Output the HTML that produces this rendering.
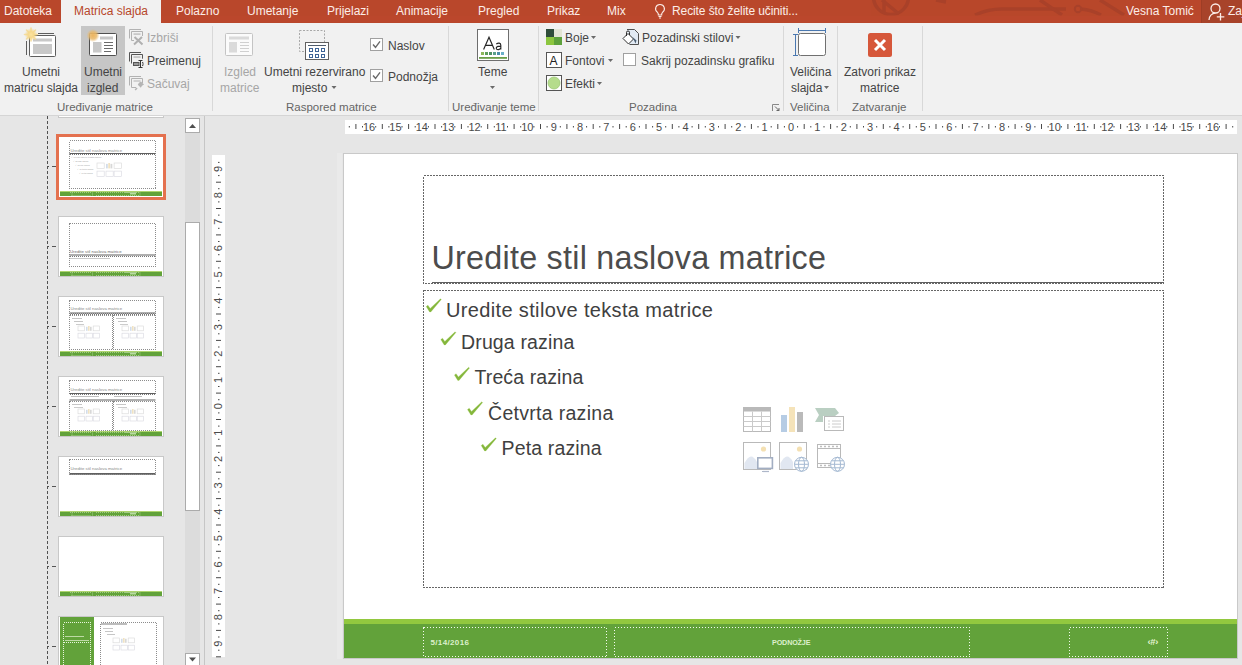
<!DOCTYPE html>
<html><head><meta charset="utf-8">
<style>
*{margin:0;padding:0;box-sizing:border-box}
html,body{width:1242px;height:665px;overflow:hidden;background:#E6E6E6;font-family:"Liberation Sans",sans-serif;position:relative}
.a{position:absolute}
.t{position:absolute;white-space:nowrap;font-size:12px;line-height:14px;color:#444}
#title{left:0;top:0;width:1242px;height:23px;background:#B9472B}
.tab{color:#FCEDE8}
#ribbon{left:0;top:23px;width:1242px;height:93px;background:#F1F1F1;border-bottom:1px solid #D5D5D5}
.sep{position:absolute;top:26px;width:1px;height:85px;background:#D8D8D8}
.gl{color:#666;font-size:11.5px}
.dis{color:#A6A6A6}
</style></head><body>

<!-- TITLE BAR -->
<div id="title" class="a">
  <svg class="a" style="left:0;top:0" width="1242" height="23">
    <defs><clipPath id="pc"><rect x="0" y="0" width="1242" height="15.5"/></clipPath></defs>
    <g fill="none" stroke="#A8412A" stroke-width="3.5" clip-path="url(#pc)" opacity="0.9">
      <circle cx="891" cy="-3" r="17.5"/>
      <path d="M884 -2 L884 12 M882 0 L899 14"/>
      <path d="M936 0 L946 2"/>
      <path d="M975 15 Q988 9 1002 9 L1066 9"/>
      <path d="M1040 0 L1062 15"/>
      <path d="M1081 9 Q1092 10 1101 15"/>
      <path d="M1100 0 L1124 15"/>
    </g>
    <circle cx="1078" cy="9" r="3.2" fill="none" stroke="#A8412A" stroke-width="2"/>
    <rect x="0" y="16" width="1242" height="6" fill="#C0472F" opacity="0.35"/>
  </svg>
  <div class="t tab" style="left:4px;top:4px">Datoteka</div>
  <div class="a" style="left:61px;top:0;width:100px;height:23px;background:#F1F1F1"></div>
  <div class="t" style="left:74px;top:4px;color:#B7472A">Matrica slajda</div>
  <div class="t tab" style="left:176px;top:4px">Polazno</div>
  <div class="t tab" style="left:247px;top:4px">Umetanje</div>
  <div class="t tab" style="left:327px;top:4px">Prijelazi</div>
  <div class="t tab" style="left:396px;top:4px">Animacije</div>
  <div class="t tab" style="left:478px;top:4px">Pregled</div>
  <div class="t tab" style="left:547px;top:4px">Prikaz</div>
  <div class="t tab" style="left:607px;top:4px">Mix</div>
  <svg class="a" style="left:654px;top:3px" width="12" height="16" viewBox="0 0 12 16">
    <path d="M6 1.5a4.3 4.3 0 0 0-2.6 7.8c.6.5.9 1.1.9 1.8V12h3.4v-.9c0-.7.3-1.3.9-1.8A4.3 4.3 0 0 0 6 1.5z M4.5 13.5h3 M5 15h2" fill="none" stroke="#FCEDE8" stroke-width="1.1"/>
  </svg>
  <div class="t tab" style="left:672px;top:4px;letter-spacing:-0.1px">Recite što želite učiniti...</div>
  <div class="t tab" style="left:1126px;top:4px">Vesna Tomić</div>
  <div class="a" style="left:1201px;top:0;width:41px;height:23px;background:#A8432A;border-left:1px solid #9E3D25"></div>
  <svg class="a" style="left:1207px;top:2px" width="19" height="19" viewBox="0 0 19 19">
    <circle cx="8.5" cy="6.5" r="4.5" fill="none" stroke="#FCEDE8" stroke-width="1.3"/>
    <path d="M2 18c0-4 2.8-6.8 6.5-6.8" fill="none" stroke="#FCEDE8" stroke-width="1.3"/>
    <path d="M13.5 11v7.5 M9.8 14.8h7.5" stroke="#FCEDE8" stroke-width="1.3"/>
  </svg>
  <div class="t tab" style="left:1228px;top:4px">Zaj</div>
</div>


<!-- RIBBON -->
<div id="ribbon" class="a"></div>
<!-- group 1 -->
<svg class="a" style="left:0;top:0" width="1242" height="116">
  <!-- Umetni matricu slajda icon -->
  <defs>
    <radialGradient id="sun1" cx="0.5" cy="0.5" r="0.5">
      <stop offset="0" stop-color="#FBE3A0"/><stop offset="0.45" stop-color="#F6D88C"/><stop offset="1" stop-color="#F6D88C" stop-opacity="0"/>
    </radialGradient>
    <radialGradient id="sun2" cx="0.5" cy="0.5" r="0.5">
      <stop offset="0" stop-color="#EDB45E"/><stop offset="0.55" stop-color="#E9B868" stop-opacity="0.85"/><stop offset="1" stop-color="#E9B868" stop-opacity="0"/>
    </radialGradient>
  </defs>
  <g>
    <path d="M38 33.5h16" stroke="#5E5E5E" stroke-width="1"/>
    <path d="M26.5 41v14" stroke="#5E5E5E" stroke-width="1"/>
    <rect x="29.5" y="35.5" width="26" height="21" rx="1" fill="#FFF" stroke="#5E5E5E"/>
    <rect x="33" y="38.5" width="19" height="3" fill="#C8C8C8"/>
    <rect x="33" y="44" width="19" height="10" fill="#C8C8C8"/>
    <path d="M31 28v13 M24.5 34.5h13 M26.5 30l9 9 M35.5 30l-9 9" stroke="#F5DA94" stroke-width="1.6" stroke-linecap="round" opacity="0.85"/>
    <circle cx="31" cy="34.5" r="6.5" fill="url(#sun1)"/>
  </g>
  <!-- highlighted Umetni izgled -->
  <rect x="81" y="26" width="44" height="69" fill="#C6C6C6"/>
  <g>
    <rect x="89.5" y="33.5" width="27" height="22" rx="1" fill="#FFF" stroke="#505050"/>
    <rect x="100" y="36.5" width="13" height="3" fill="#C6C6C6"/>
    <rect x="93" y="42" width="8.5" height="10.5" fill="#C8C8C8"/>
    <path d="M104 42.5h9 M104 45.5h9 M104 48.5h9 M104 51.5h7" stroke="#6A6A6A" stroke-width="1"/>
    <circle cx="93" cy="35.5" r="6.5" fill="url(#sun2)"/>
  </g>
  <!-- small icons -->
  <g fill="none" stroke="#B2B2B2" stroke-width="1">
    <path d="M129.5 38.5V29.5H141"/>
    <path d="M131.5 40.5V31.5H142.5V36 M131.5 40.5H134"/>
    <rect x="133.5" y="33.3" width="7" height="1.6" fill="#C4C4C4" stroke="none"/>
    <path d="M134.5 37l8 7.5 M142 37l-8 7.5" stroke="#B0B0B0" stroke-width="2"/>
  </g>
  <g fill="none" stroke="#555" stroke-width="1">
    <path d="M129.5 61.5V52.5H141"/>
    <path d="M131.5 63.5V54.5H142.5V58.7"/>
    <rect x="133.5" y="56.3" width="7" height="1.5" fill="#BBB" stroke="none"/>
    <rect x="133.5" y="62.5" width="5.5" height="3" fill="#999"/>
    <path d="M142 62.5h1v3h-1"/>
    <path d="M140.5 60.5v7 M138.5 60.5h4 M138.5 67.5h4" stroke="#333"/>
  </g>
  <g fill="none" stroke="#B2B2B2" stroke-width="1">
    <path d="M129.5 85.5V76.5H141"/>
    <path d="M131.5 87.5V78.5H142.5V83 M131.5 87.5H136"/>
    <rect x="133.5" y="80.3" width="7" height="1.4" fill="#C4C4C4" stroke="none"/>
    <path d="M141 81.5l3 3-2 1.2-1.2 2-3-3 1.2-2z" fill="#B4B4B4" stroke="none"/>
    <path d="M137 88l-1.8 2" stroke="#B4B4B4" stroke-width="1.5"/>
  </g>
  <!-- Izgled matrice icon (disabled) -->
  <g>
    <rect x="225.5" y="33.5" width="27" height="22" rx="1" fill="#FBFBFB" stroke="#C4C4C4"/>
    <rect x="229" y="36.5" width="20" height="3" fill="#DADADA"/>
    <rect x="229" y="42" width="8" height="10.5" fill="#DADADA"/>
    <path d="M240 42.5h9 M240 45.5h9 M240 48.5h9 M240 51.5h9" stroke="#D0D0D0"/>
  </g>
  <!-- Umetni rezervirano mjesto icon -->
  <g>
    <rect x="299.5" y="30.5" width="25" height="21" fill="none" stroke="#A8A8A8" stroke-dasharray="2 1.5"/>
    <rect x="305.5" y="42.5" width="23" height="17" fill="#FFF" stroke="#606060"/>
    <path d="M308 45.5h18" stroke="#505C6C" stroke-width="1"/>
    <g fill="none" stroke="#3E6496" stroke-width="1">
      <rect x="309.5" y="48.5" width="3" height="3"/><rect x="315.5" y="48.5" width="3" height="3"/><rect x="321.5" y="48.5" width="3" height="3"/>
      <rect x="309.5" y="54.5" width="3" height="3"/><rect x="315.5" y="54.5" width="3" height="3"/><rect x="321.5" y="54.5" width="3" height="3"/>
    </g>
  </g>
  <!-- checkboxes -->
  <rect x="370.5" y="38.5" width="12" height="12" fill="#FFF" stroke="#A0A0A0"/>
  <path d="M373 44.5l2.5 2.8 4.5-6" fill="none" stroke="#6A6A6A" stroke-width="1.4"/>
  <rect x="370.5" y="69.5" width="12" height="12" fill="#FFF" stroke="#A0A0A0"/>
  <path d="M373 75.5l2.5 2.8 4.5-6" fill="none" stroke="#6A6A6A" stroke-width="1.4"/>
  <!-- Teme icon -->
  <rect x="477.5" y="29.5" width="31" height="31" fill="#FFF" stroke="#6E6E6E"/>
  <g fill="none" stroke="#262626" stroke-width="1.15">
    <path d="M483.6 49.6L489 37.3L494.3 49.6 M485.4 45.3H492.6"/>
    <path d="M496.3 43.9Q497.8 42.9 499.2 43.1Q500.8 43.4 500.8 45.2V49.6 M500.8 46.1Q497.6 46 496.6 47.2Q495.9 48.2 496.6 49.1Q497.3 49.8 498.6 49.6Q500.2 49.3 500.8 48"/>
  </g>
  <g>
    <rect x="481" y="52" width="3" height="3" fill="#8DB85A"/>
    <rect x="485" y="52" width="3" height="3" fill="#5E9E5A"/>
    <rect x="489" y="52" width="3" height="3" fill="#4E9064"/>
    <rect x="493" y="52" width="3" height="3" fill="#5AA08A"/>
    <rect x="497" y="52" width="3" height="3" fill="#4A8EA8"/>
    <rect x="501" y="52" width="3" height="3" fill="#6AB0C8"/>
    <rect x="479" y="57" width="28" height="1.8" fill="#6A9E48"/>
  </g>
  <!-- Boje -->
  <rect x="546" y="29" width="8" height="8" fill="#2F4D3A"/>
  <rect x="554" y="29" width="8" height="8" fill="#E2E4D4"/>
  <rect x="546" y="37" width="8" height="8" fill="#8CC63F"/>
  <rect x="554" y="37" width="8" height="8" fill="#5DA13C"/>
  <!-- Fontovi -->
  <rect x="546.5" y="52.5" width="15" height="15" fill="#FFF" stroke="#555"/>
  <text x="549.5" y="65" font-family="Liberation Sans" font-size="12" fill="#222">A</text>
  <!-- Efekti -->
  <rect x="546.5" y="75.5" width="15" height="15" fill="#FFF" stroke="#555"/>
  <circle cx="554" cy="83" r="6" fill="#B5DC8C" stroke="#9CC874" stroke-width="0.8"/>
  <!-- Pozadinski stilovi icon -->
  <path d="M627 29.5H634.5L638.5 33.5V44.5H629.5" fill="#E2EAF3" stroke="#505050"/>
  <path d="M623 38.5L628 33.5L633.5 39L628.5 44Z" fill="#FFF" stroke="#303030"/>
  <path d="M626.5 36V32.3Q626.5 31 628 31Q629.5 31 629.5 32.3V35" fill="none" stroke="#303030"/>
  <path d="M632.5 37L636.5 40.5L635.5 43.5Z" fill="#4A5E72"/>
  <!-- Sakrij checkbox -->
  <rect x="623.5" y="53.5" width="12" height="12" fill="#FFF" stroke="#A0A0A0"/>
  <!-- dialog launcher -->
  <path d="M772.5 111V104.5H779" fill="none" stroke="#888"/>
  <path d="M775 106.5l4 4 M779 108v2.5h-2.5" fill="none" stroke="#666"/>
  <!-- Velicina icon -->
  <path d="M798 30.5h28 M798.5 28v5 M825.5 28v5" stroke="#4A78B0" stroke-width="1"/>
  <path d="M795.5 34v22 M793 34.5h5 M793 55.5h5" stroke="#4A78B0" stroke-width="1"/>
  <rect x="798.5" y="33.5" width="27" height="22" rx="2" fill="#FFF" stroke="#707070"/>
  <!-- close -->
  <rect x="868" y="33" width="24" height="24" rx="2.5" fill="#D6573A"/>
  <path d="M875 40l10 10 M885 40l-10 10" stroke="#FFF" stroke-width="3"/>
  <!-- dropdown arrows -->
  <g fill="#6A6A6A">
    <path d="M331.5 86h5l-2.5 3z"/>
    <path d="M490 86h5l-2.5 3z"/>
    <path d="M591 36h5l-2.5 3z"/>
    <path d="M608 59h5l-2.5 3z"/>
    <path d="M597 82h5l-2.5 3z"/>
    <path d="M735.5 36h5l-2.5 3z"/>
    <path d="M824 86h5l-2.5 3z"/>
  </g>
</svg>
<div class="sep" style="left:212px"></div>
<div class="sep" style="left:448px"></div>
<div class="sep" style="left:538px"></div>
<div class="sep" style="left:783px"></div>
<div class="sep" style="left:837px"></div>
<div class="sep" style="left:922px"></div>

<div class="t" style="left:22px;top:65px">Umetni</div>
<div class="t" style="left:4px;top:81px">matricu slajda</div>
<div class="t" style="left:84px;top:65px">Umetni</div>
<div class="t" style="left:87px;top:81px">izgled</div>
<div class="t dis" style="left:147px;top:31px">Izbriši</div>
<div class="t" style="left:147px;top:54px">Preimenuj</div>
<div class="t dis" style="left:147px;top:77px">Sačuvaj</div>
<div class="t gl" style="left:57px;top:100px">Uređivanje matrice</div>

<div class="t dis" style="left:224px;top:65px">Izgled</div>
<div class="t dis" style="left:220px;top:81px">matrice</div>
<div class="t" style="left:264px;top:65px">Umetni rezervirano</div>
<div class="t" style="left:292px;top:81px">mjesto</div>
<div class="t" style="left:388px;top:39px">Naslov</div>
<div class="t" style="left:388px;top:70px">Podnožja</div>
<div class="t gl" style="left:286px;top:100px">Raspored matrice</div>

<div class="t" style="left:478px;top:65px">Teme</div>
<div class="t gl" style="left:452px;top:100px">Uređivanje teme</div>

<div class="t" style="left:565px;top:31px">Boje</div>
<div class="t" style="left:565px;top:54px">Fontovi</div>
<div class="t" style="left:565px;top:77px">Efekti</div>
<div class="t" style="left:642px;top:31px">Pozadinski stilovi</div>
<div class="t" style="left:641px;top:54px">Sakrij pozadinsku grafiku</div>
<div class="t gl" style="left:629px;top:100px">Pozadina</div>

<div class="t" style="left:790px;top:65px">Veličina</div>
<div class="t" style="left:791px;top:81px">slajda</div>
<div class="t gl" style="left:790px;top:100px">Veličina</div>

<div class="t" style="left:844px;top:65px">Zatvori prikaz</div>
<div class="t" style="left:860px;top:81px">matrice</div>
<div class="t gl" style="left:852px;top:100px">Zatvaranje</div>

<!-- WORKSPACE -->
<!-- PANE -->
<div class="a" style="left:0;top:116px;width:204px;height:549px;background:#E6E6E6;overflow:hidden">
<svg class="a" style="left:0;top:-116px" width="204" height="665">
  <line x1="47.5" y1="116" x2="47.5" y2="665" stroke="#505050" stroke-width="1" stroke-dasharray="3 2"/>
  <rect x="52" y="166" width="4" height="1" fill="#555"/><rect x="48" y="166" width="1" height="1" fill="#555"/><rect x="52" y="246" width="4" height="1" fill="#555"/><rect x="48" y="246" width="1" height="1" fill="#555"/><rect x="52" y="326" width="4" height="1" fill="#555"/><rect x="48" y="326" width="1" height="1" fill="#555"/><rect x="52" y="406" width="4" height="1" fill="#555"/><rect x="48" y="406" width="1" height="1" fill="#555"/><rect x="52" y="486" width="4" height="1" fill="#555"/><rect x="48" y="486" width="1" height="1" fill="#555"/><rect x="52" y="566" width="4" height="1" fill="#555"/><rect x="48" y="566" width="1" height="1" fill="#555"/><rect x="52" y="646" width="4" height="1" fill="#555"/><rect x="48" y="646" width="1" height="1" fill="#555"/>
  <rect x="58.5" y="108" width="105" height="9.5" fill="#FFF" stroke="#C8C8C8"/>
<rect x="60" y="112" width="102" height="4" fill="#62A23A"/>
<rect x="57.5" y="135.5" width="107" height="63" fill="#FFF" stroke="#E4714F" stroke-width="3"/>
<rect x="69.5" y="140.5" width="86.0" height="48.0" fill="none" stroke="#8C8C8C" stroke-width="1" stroke-dasharray="1 1" shape-rendering="crispEdges"/>
<text x="70.5" y="151.5" font-family="Liberation Sans" font-size="4.3" fill="#8A8A8A" letter-spacing="0">Uredite stil naslova matrice</text>
<rect x="69.5" y="153" width="86.0" height="1" fill="#606060"/><line x1="69.5" y1="154.5" x2="155.5" y2="154.5" stroke="#777" stroke-width="1" stroke-dasharray="1 1" shape-rendering="crispEdges"/>
<text x="71" y="158.0" font-family="Liberation Sans" font-size="2.2" fill="#A0A0A0" letter-spacing="0">✓ Uredite stilove teksta matrice</text><text x="73" y="162.0" font-family="Liberation Sans" font-size="2.2" fill="#A0A0A0" letter-spacing="0">✓ Druga razina</text><text x="75" y="166.0" font-family="Liberation Sans" font-size="2.2" fill="#A0A0A0" letter-spacing="0">✓ Treća razina</text><text x="77" y="170.0" font-family="Liberation Sans" font-size="2.2" fill="#A0A0A0" letter-spacing="0">✓ Četvrta razina</text><text x="79" y="174.0" font-family="Liberation Sans" font-size="2.2" fill="#A0A0A0" letter-spacing="0">✓ Peta razina</text>
<g opacity="0.45"><rect x="97" y="163" width="7.2" height="5.4" fill="none" stroke="#AAA" stroke-width="0.6"/><rect x="106.0" y="163.9" width="1.8" height="4.5" fill="#9DB5D2"/><rect x="108.25" y="163" width="1.8" height="5.4" fill="#E2C27A"/><rect x="110.5" y="163.9" width="1.8" height="4.5" fill="#AAA"/><rect x="114.1" y="163" width="7.2" height="5.4" fill="none" stroke="#AAA" stroke-width="0.6"/><rect x="97" y="171.1" width="7.2" height="5.4" fill="none" stroke="#AAB" stroke-width="0.6"/><rect x="106.0" y="171.1" width="7.2" height="5.4" fill="none" stroke="#AAB" stroke-width="0.6"/><rect x="114.1" y="171.1" width="7.2" height="5.4" fill="none" stroke="#AAB" stroke-width="0.6"/></g>
<rect x="60" y="191.2" width="102" height="0.8" fill="#9ACB4A"/><rect x="60" y="192" width="102" height="4" fill="#62A23A"/><path d="M70 192.5h21 M71.5 195.5h20 M72 192.5v3 M92.5 192.5v3 M96 192.5h43 M96 195.5h43 M140 192.5v3 M125 192.5h12" stroke="#CFE6B8" stroke-width="0.6" stroke-dasharray="1 1" fill="none"/><rect x="130" y="193" width="6" height="1.5" fill="#B9DBA0"/>
<rect x="58.5" y="216.5" width="105" height="60" fill="#FFF" stroke="#C8C8C8"/>
<rect x="69.5" y="223.5" width="86.0" height="42.5" fill="none" stroke="#8C8C8C" stroke-width="1" stroke-dasharray="1 1" shape-rendering="crispEdges"/>
<text x="70" y="252.5" font-family="Liberation Sans" font-size="4.3" fill="#6A6A6A" letter-spacing="0">Uredite stil naslova matrice</text>
<rect x="69.5" y="254.5" width="86.0" height="1" fill="#606060"/><line x1="69.5" y1="256.0" x2="155.5" y2="256.0" stroke="#777" stroke-width="1" stroke-dasharray="1 1" shape-rendering="crispEdges"/>
<rect x="70" y="258" width="40" height="1" fill="#C8C8C8"/>
<rect x="60" y="271.2" width="102" height="0.8" fill="#9ACB4A"/><rect x="60" y="272" width="102" height="4" fill="#62A23A"/><path d="M70 272.5h21 M71.5 275.5h20 M72 272.5v3 M92.5 272.5v3 M96 272.5h43 M96 275.5h43 M140 272.5v3 M125 272.5h12" stroke="#CFE6B8" stroke-width="0.6" stroke-dasharray="1 1" fill="none"/><rect x="130" y="273" width="6" height="1.5" fill="#B9DBA0"/>
<rect x="58.5" y="296.5" width="105" height="60" fill="#FFF" stroke="#C8C8C8"/>
<rect x="69.5" y="300.5" width="86.0" height="12.5" fill="none" stroke="#8C8C8C" stroke-width="1" stroke-dasharray="1 1" shape-rendering="crispEdges"/>
<text x="70.5" y="310" font-family="Liberation Sans" font-size="4.3" fill="#8A8A8A" letter-spacing="0">Uredite stil naslova matrice</text>
<rect x="69.5" y="312.5" width="86.0" height="1" fill="#606060"/><line x1="69.5" y1="314.0" x2="155.5" y2="314.0" stroke="#777" stroke-width="1" stroke-dasharray="1 1" shape-rendering="crispEdges"/>
<rect x="69.5" y="315" width="43.0" height="34.5" fill="none" stroke="#8C8C8C" stroke-width="1" stroke-dasharray="1 1" shape-rendering="crispEdges"/>
<rect x="113.5" y="315" width="42.0" height="34.5" fill="none" stroke="#8C8C8C" stroke-width="1" stroke-dasharray="1 1" shape-rendering="crispEdges"/>
<rect x="72" y="318" width="10" height="0.8" fill="#B8B8B8"/>
<rect x="74" y="321" width="9" height="0.8" fill="#B8B8B8"/>
<rect x="76" y="324" width="8" height="0.8" fill="#C0C0C0"/>
<g opacity="0.45"><rect x="78" y="326" width="6.4" height="4.800000000000001" fill="none" stroke="#AAA" stroke-width="0.6"/><rect x="86.0" y="326.8" width="1.6" height="4.0" fill="#9DB5D2"/><rect x="88.0" y="326" width="1.6" height="4.800000000000001" fill="#E2C27A"/><rect x="90.0" y="326.8" width="1.6" height="4.0" fill="#AAA"/><rect x="93.2" y="326" width="6.4" height="4.800000000000001" fill="none" stroke="#AAA" stroke-width="0.6"/><rect x="78" y="333.2" width="6.4" height="4.800000000000001" fill="none" stroke="#AAB" stroke-width="0.6"/><rect x="86.0" y="333.2" width="6.4" height="4.800000000000001" fill="none" stroke="#AAB" stroke-width="0.6"/><rect x="93.2" y="333.2" width="6.4" height="4.800000000000001" fill="none" stroke="#AAB" stroke-width="0.6"/></g>
<rect x="116" y="318" width="10" height="0.8" fill="#B8B8B8"/>
<rect x="118" y="321" width="9" height="0.8" fill="#B8B8B8"/>
<rect x="120" y="324" width="8" height="0.8" fill="#C0C0C0"/>
<g opacity="0.45"><rect x="122" y="326" width="6.4" height="4.800000000000001" fill="none" stroke="#AAA" stroke-width="0.6"/><rect x="130.0" y="326.8" width="1.6" height="4.0" fill="#9DB5D2"/><rect x="132.0" y="326" width="1.6" height="4.800000000000001" fill="#E2C27A"/><rect x="134.0" y="326.8" width="1.6" height="4.0" fill="#AAA"/><rect x="137.2" y="326" width="6.4" height="4.800000000000001" fill="none" stroke="#AAA" stroke-width="0.6"/><rect x="122" y="333.2" width="6.4" height="4.800000000000001" fill="none" stroke="#AAB" stroke-width="0.6"/><rect x="130.0" y="333.2" width="6.4" height="4.800000000000001" fill="none" stroke="#AAB" stroke-width="0.6"/><rect x="137.2" y="333.2" width="6.4" height="4.800000000000001" fill="none" stroke="#AAB" stroke-width="0.6"/></g>
<rect x="60" y="351.2" width="102" height="0.8" fill="#9ACB4A"/><rect x="60" y="352" width="102" height="4" fill="#62A23A"/><path d="M70 352.5h21 M71.5 355.5h20 M72 352.5v3 M92.5 352.5v3 M96 352.5h43 M96 355.5h43 M140 352.5v3 M125 352.5h12" stroke="#CFE6B8" stroke-width="0.6" stroke-dasharray="1 1" fill="none"/><rect x="130" y="353" width="6" height="1.5" fill="#B9DBA0"/>
<rect x="58.5" y="376.5" width="105" height="60" fill="#FFF" stroke="#C8C8C8"/>
<rect x="69.5" y="380.5" width="86.0" height="13.5" fill="none" stroke="#8C8C8C" stroke-width="1" stroke-dasharray="1 1" shape-rendering="crispEdges"/>
<text x="70.5" y="390.5" font-family="Liberation Sans" font-size="4.3" fill="#8A8A8A" letter-spacing="0">Uredite stil naslova matrice</text>
<rect x="69.5" y="393" width="86.0" height="1" fill="#606060"/><line x1="69.5" y1="394.5" x2="155.5" y2="394.5" stroke="#777" stroke-width="1" stroke-dasharray="1 1" shape-rendering="crispEdges"/>
<rect x="71" y="396" width="28" height="0.8" fill="#B0B0B0"/>
<rect x="114" y="396" width="28" height="0.8" fill="#B0B0B0"/>
<rect x="69.5" y="399.5" width="86.0" height="1" fill="#606060"/><line x1="69.5" y1="401.0" x2="155.5" y2="401.0" stroke="#777" stroke-width="1" stroke-dasharray="1 1" shape-rendering="crispEdges"/>
<rect x="69.5" y="401.5" width="43.0" height="28.5" fill="none" stroke="#8C8C8C" stroke-width="1" stroke-dasharray="1 1" shape-rendering="crispEdges"/>
<rect x="113.5" y="401.5" width="42.0" height="28.5" fill="none" stroke="#8C8C8C" stroke-width="1" stroke-dasharray="1 1" shape-rendering="crispEdges"/>
<rect x="72" y="404" width="10" height="0.8" fill="#B8B8B8"/>
<rect x="74" y="407" width="9" height="0.8" fill="#C0C0C0"/>
<g opacity="0.45"><rect x="78" y="409" width="6.4" height="4.800000000000001" fill="none" stroke="#AAA" stroke-width="0.6"/><rect x="86.0" y="409.8" width="1.6" height="4.0" fill="#9DB5D2"/><rect x="88.0" y="409" width="1.6" height="4.800000000000001" fill="#E2C27A"/><rect x="90.0" y="409.8" width="1.6" height="4.0" fill="#AAA"/><rect x="93.2" y="409" width="6.4" height="4.800000000000001" fill="none" stroke="#AAA" stroke-width="0.6"/><rect x="78" y="416.2" width="6.4" height="4.800000000000001" fill="none" stroke="#AAB" stroke-width="0.6"/><rect x="86.0" y="416.2" width="6.4" height="4.800000000000001" fill="none" stroke="#AAB" stroke-width="0.6"/><rect x="93.2" y="416.2" width="6.4" height="4.800000000000001" fill="none" stroke="#AAB" stroke-width="0.6"/></g>
<rect x="116" y="404" width="10" height="0.8" fill="#B8B8B8"/>
<rect x="118" y="407" width="9" height="0.8" fill="#C0C0C0"/>
<g opacity="0.45"><rect x="122" y="409" width="6.4" height="4.800000000000001" fill="none" stroke="#AAA" stroke-width="0.6"/><rect x="130.0" y="409.8" width="1.6" height="4.0" fill="#9DB5D2"/><rect x="132.0" y="409" width="1.6" height="4.800000000000001" fill="#E2C27A"/><rect x="134.0" y="409.8" width="1.6" height="4.0" fill="#AAA"/><rect x="137.2" y="409" width="6.4" height="4.800000000000001" fill="none" stroke="#AAA" stroke-width="0.6"/><rect x="122" y="416.2" width="6.4" height="4.800000000000001" fill="none" stroke="#AAB" stroke-width="0.6"/><rect x="130.0" y="416.2" width="6.4" height="4.800000000000001" fill="none" stroke="#AAB" stroke-width="0.6"/><rect x="137.2" y="416.2" width="6.4" height="4.800000000000001" fill="none" stroke="#AAB" stroke-width="0.6"/></g>
<rect x="60" y="431.2" width="102" height="0.8" fill="#9ACB4A"/><rect x="60" y="432" width="102" height="4" fill="#62A23A"/><path d="M70 432.5h21 M71.5 435.5h20 M72 432.5v3 M92.5 432.5v3 M96 432.5h43 M96 435.5h43 M140 432.5v3 M125 432.5h12" stroke="#CFE6B8" stroke-width="0.6" stroke-dasharray="1 1" fill="none"/><rect x="130" y="433" width="6" height="1.5" fill="#B9DBA0"/>
<rect x="58.5" y="456.5" width="105" height="60" fill="#FFF" stroke="#C8C8C8"/>
<rect x="69.5" y="459.5" width="86.0" height="14.5" fill="none" stroke="#8C8C8C" stroke-width="1" stroke-dasharray="1 1" shape-rendering="crispEdges"/>
<text x="70.5" y="470" font-family="Liberation Sans" font-size="4.3" fill="#8A8A8A" letter-spacing="0">Uredite stil naslova matrice</text>
<rect x="69.5" y="473" width="86.0" height="1" fill="#606060"/><line x1="69.5" y1="474.5" x2="155.5" y2="474.5" stroke="#777" stroke-width="1" stroke-dasharray="1 1" shape-rendering="crispEdges"/>
<rect x="60" y="511.2" width="102" height="0.8" fill="#9ACB4A"/><rect x="60" y="512" width="102" height="4" fill="#62A23A"/><path d="M70 512.5h21 M71.5 515.5h20 M72 512.5v3 M92.5 512.5v3 M96 512.5h43 M96 515.5h43 M140 512.5v3 M125 512.5h12" stroke="#CFE6B8" stroke-width="0.6" stroke-dasharray="1 1" fill="none"/><rect x="130" y="513" width="6" height="1.5" fill="#B9DBA0"/>
<rect x="58.5" y="536.5" width="105" height="60" fill="#FFF" stroke="#C8C8C8"/>
<rect x="60" y="591.2" width="102" height="0.8" fill="#9ACB4A"/><rect x="60" y="592" width="102" height="4" fill="#62A23A"/><path d="M70 592.5h21 M71.5 595.5h20 M72 592.5v3 M92.5 592.5v3 M96 592.5h43 M96 595.5h43 M140 592.5v3 M125 592.5h12" stroke="#CFE6B8" stroke-width="0.6" stroke-dasharray="1 1" fill="none"/><rect x="130" y="593" width="6" height="1.5" fill="#B9DBA0"/>
<rect x="58.5" y="616.5" width="105" height="60" fill="#FFF" stroke="#C8C8C8"/>
<rect x="60" y="617" width="34" height="48" fill="#62A23A"/>
<rect x="63.5" y="622.5" width="27" height="45" fill="none" stroke="#E8F4DC" stroke-width="1" stroke-dasharray="1 1" shape-rendering="crispEdges"/>
<rect x="65" y="636" width="19" height="0.9" fill="#C8E0B0"/>
<rect x="65" y="640" width="24" height="0.9" fill="#C8E0B0"/>
<line x1="63.5" y1="642.5" x2="90.5" y2="642.5" stroke="#E8F4DC" stroke-width="1" stroke-dasharray="1 1" shape-rendering="crispEdges"/>
<rect x="100.5" y="622.5" width="55.5" height="42.5" fill="none" stroke="#8C8C8C" stroke-width="1" stroke-dasharray="1 1" shape-rendering="crispEdges"/>
<rect x="101" y="623.5" width="26" height="1" fill="#7A7A7A"/>
<rect x="103" y="628" width="10" height="0.8" fill="#B8B8B8"/>
<rect x="105" y="631" width="8" height="0.8" fill="#B8B8B8"/>
<rect x="107" y="634" width="8" height="0.8" fill="#B8B8B8"/>
<g opacity="0.45"><rect x="113" y="638" width="6.4" height="4.800000000000001" fill="none" stroke="#AAA" stroke-width="0.6"/><rect x="121.0" y="638.8" width="1.6" height="4.0" fill="#9DB5D2"/><rect x="123.0" y="638" width="1.6" height="4.800000000000001" fill="#E2C27A"/><rect x="125.0" y="638.8" width="1.6" height="4.0" fill="#AAA"/><rect x="128.2" y="638" width="6.4" height="4.800000000000001" fill="none" stroke="#AAA" stroke-width="0.6"/><rect x="113" y="645.2" width="6.4" height="4.800000000000001" fill="none" stroke="#AAB" stroke-width="0.6"/><rect x="121.0" y="645.2" width="6.4" height="4.800000000000001" fill="none" stroke="#AAB" stroke-width="0.6"/><rect x="128.2" y="645.2" width="6.4" height="4.800000000000001" fill="none" stroke="#AAB" stroke-width="0.6"/></g>
  <rect x="185" y="118" width="15" height="547" fill="#DCDCDC"/>
  <rect x="185.5" y="118.5" width="14" height="14" fill="#FFF" stroke="#ABABAB"/>
  <path d="M189 128h7l-3.5-4z" fill="#505050"/>
  <rect x="185.5" y="222.5" width="14" height="288" fill="#FFF" stroke="#ABABAB"/>
  <rect x="185.5" y="653.5" width="14" height="14" fill="#FFF" stroke="#ABABAB"/>
  <path d="M189 657.5h7l-3.5 4z" fill="#505050"/>
</svg>
</div>
<div class="a" style="left:204px;top:116px;width:1px;height:549px;background:#C6C6C6"></div>

<!-- RULERS -->
<svg class="a" style="left:0;top:0" width="1242" height="665">
  <rect x="345" y="120" width="892" height="14" fill="#FFF"/>
  <g font-family="Liberation Sans" font-size="11" fill="#4A4A4A">
  <rect x="348.8" y="126" width="1" height="1.5"/>
<rect x="355.4" y="124" width="1" height="5"/>
<rect x="362.0" y="126" width="1" height="1.5"/>
<text x="369.1" y="131" text-anchor="middle">16</text>
<rect x="375.2" y="126" width="1" height="1.5"/>
<rect x="381.8" y="124" width="1" height="5"/>
<rect x="388.4" y="126" width="1" height="1.5"/>
<text x="395.4" y="131" text-anchor="middle">15</text>
<rect x="401.5" y="126" width="1" height="1.5"/>
<rect x="408.1" y="124" width="1" height="5"/>
<rect x="414.7" y="126" width="1" height="1.5"/>
<text x="421.8" y="131" text-anchor="middle">14</text>
<rect x="427.9" y="126" width="1" height="1.5"/>
<rect x="434.5" y="124" width="1" height="5"/>
<rect x="441.1" y="126" width="1" height="1.5"/>
<text x="448.2" y="131" text-anchor="middle">13</text>
<rect x="454.3" y="126" width="1" height="1.5"/>
<rect x="460.9" y="124" width="1" height="5"/>
<rect x="467.5" y="126" width="1" height="1.5"/>
<text x="474.6" y="131" text-anchor="middle">12</text>
<rect x="480.7" y="126" width="1" height="1.5"/>
<rect x="487.2" y="124" width="1" height="5"/>
<rect x="493.8" y="126" width="1" height="1.5"/>
<text x="500.9" y="131" text-anchor="middle">11</text>
<rect x="507.0" y="126" width="1" height="1.5"/>
<rect x="513.6" y="124" width="1" height="5"/>
<rect x="520.2" y="126" width="1" height="1.5"/>
<text x="527.3" y="131" text-anchor="middle">10</text>
<rect x="533.4" y="126" width="1" height="1.5"/>
<rect x="540.0" y="124" width="1" height="5"/>
<rect x="546.6" y="126" width="1" height="1.5"/>
<text x="553.7" y="131" text-anchor="middle">9</text>
<rect x="559.8" y="126" width="1" height="1.5"/>
<rect x="566.4" y="124" width="1" height="5"/>
<rect x="572.9" y="126" width="1" height="1.5"/>
<text x="580.0" y="131" text-anchor="middle">8</text>
<rect x="586.1" y="126" width="1" height="1.5"/>
<rect x="592.7" y="124" width="1" height="5"/>
<rect x="599.3" y="126" width="1" height="1.5"/>
<text x="606.4" y="131" text-anchor="middle">7</text>
<rect x="612.5" y="126" width="1" height="1.5"/>
<rect x="619.1" y="124" width="1" height="5"/>
<rect x="625.7" y="126" width="1" height="1.5"/>
<text x="632.8" y="131" text-anchor="middle">6</text>
<rect x="638.9" y="126" width="1" height="1.5"/>
<rect x="645.5" y="124" width="1" height="5"/>
<rect x="652.1" y="126" width="1" height="1.5"/>
<text x="659.1" y="131" text-anchor="middle">5</text>
<rect x="665.2" y="126" width="1" height="1.5"/>
<rect x="671.8" y="124" width="1" height="5"/>
<rect x="678.4" y="126" width="1" height="1.5"/>
<text x="685.5" y="131" text-anchor="middle">4</text>
<rect x="691.6" y="126" width="1" height="1.5"/>
<rect x="698.2" y="124" width="1" height="5"/>
<rect x="704.8" y="126" width="1" height="1.5"/>
<text x="711.9" y="131" text-anchor="middle">3</text>
<rect x="718.0" y="126" width="1" height="1.5"/>
<rect x="724.6" y="124" width="1" height="5"/>
<rect x="731.2" y="126" width="1" height="1.5"/>
<text x="738.3" y="131" text-anchor="middle">2</text>
<rect x="744.4" y="126" width="1" height="1.5"/>
<rect x="750.9" y="124" width="1" height="5"/>
<rect x="757.5" y="126" width="1" height="1.5"/>
<text x="764.6" y="131" text-anchor="middle">1</text>
<rect x="770.7" y="126" width="1" height="1.5"/>
<rect x="777.3" y="124" width="1" height="5"/>
<rect x="783.9" y="126" width="1" height="1.5"/>
<text x="791.0" y="131" text-anchor="middle">0</text>
<rect x="797.1" y="126" width="1" height="1.5"/>
<rect x="803.7" y="124" width="1" height="5"/>
<rect x="810.3" y="126" width="1" height="1.5"/>
<text x="817.4" y="131" text-anchor="middle">1</text>
<rect x="823.5" y="126" width="1" height="1.5"/>
<rect x="830.1" y="124" width="1" height="5"/>
<rect x="836.6" y="126" width="1" height="1.5"/>
<text x="843.7" y="131" text-anchor="middle">2</text>
<rect x="849.8" y="126" width="1" height="1.5"/>
<rect x="856.4" y="124" width="1" height="5"/>
<rect x="863.0" y="126" width="1" height="1.5"/>
<text x="870.1" y="131" text-anchor="middle">3</text>
<rect x="876.2" y="126" width="1" height="1.5"/>
<rect x="882.8" y="124" width="1" height="5"/>
<rect x="889.4" y="126" width="1" height="1.5"/>
<text x="896.5" y="131" text-anchor="middle">4</text>
<rect x="902.6" y="126" width="1" height="1.5"/>
<rect x="909.2" y="124" width="1" height="5"/>
<rect x="915.8" y="126" width="1" height="1.5"/>
<text x="922.9" y="131" text-anchor="middle">5</text>
<rect x="928.9" y="126" width="1" height="1.5"/>
<rect x="935.5" y="124" width="1" height="5"/>
<rect x="942.1" y="126" width="1" height="1.5"/>
<text x="949.2" y="131" text-anchor="middle">6</text>
<rect x="955.3" y="126" width="1" height="1.5"/>
<rect x="961.9" y="124" width="1" height="5"/>
<rect x="968.5" y="126" width="1" height="1.5"/>
<text x="975.6" y="131" text-anchor="middle">7</text>
<rect x="981.7" y="126" width="1" height="1.5"/>
<rect x="988.3" y="124" width="1" height="5"/>
<rect x="994.9" y="126" width="1" height="1.5"/>
<text x="1002.0" y="131" text-anchor="middle">8</text>
<rect x="1008.1" y="126" width="1" height="1.5"/>
<rect x="1014.6" y="124" width="1" height="5"/>
<rect x="1021.2" y="126" width="1" height="1.5"/>
<text x="1028.3" y="131" text-anchor="middle">9</text>
<rect x="1034.4" y="126" width="1" height="1.5"/>
<rect x="1041.0" y="124" width="1" height="5"/>
<rect x="1047.6" y="126" width="1" height="1.5"/>
<text x="1054.7" y="131" text-anchor="middle">10</text>
<rect x="1060.8" y="126" width="1" height="1.5"/>
<rect x="1067.4" y="124" width="1" height="5"/>
<rect x="1074.0" y="126" width="1" height="1.5"/>
<text x="1081.1" y="131" text-anchor="middle">11</text>
<rect x="1087.2" y="126" width="1" height="1.5"/>
<rect x="1093.8" y="124" width="1" height="5"/>
<rect x="1100.3" y="126" width="1" height="1.5"/>
<text x="1107.4" y="131" text-anchor="middle">12</text>
<rect x="1113.5" y="126" width="1" height="1.5"/>
<rect x="1120.1" y="124" width="1" height="5"/>
<rect x="1126.7" y="126" width="1" height="1.5"/>
<text x="1133.8" y="131" text-anchor="middle">13</text>
<rect x="1139.9" y="126" width="1" height="1.5"/>
<rect x="1146.5" y="124" width="1" height="5"/>
<rect x="1153.1" y="126" width="1" height="1.5"/>
<text x="1160.2" y="131" text-anchor="middle">14</text>
<rect x="1166.3" y="126" width="1" height="1.5"/>
<rect x="1172.9" y="124" width="1" height="5"/>
<rect x="1179.5" y="126" width="1" height="1.5"/>
<text x="1186.5" y="131" text-anchor="middle">15</text>
<rect x="1192.6" y="126" width="1" height="1.5"/>
<rect x="1199.2" y="124" width="1" height="5"/>
<rect x="1205.8" y="126" width="1" height="1.5"/>
<text x="1212.9" y="131" text-anchor="middle">16</text>
<rect x="1219.0" y="126" width="1" height="1.5"/>
<rect x="1225.6" y="124" width="1" height="5"/>
<rect x="1232.2" y="126" width="1" height="1.5"/>
  </g>
  <rect x="212" y="155" width="13" height="502" fill="#FFF"/>
  <g font-family="Liberation Sans" font-size="11" fill="#4A4A4A">
  <rect x="218" y="161.9" width="1.5" height="1"/>
<text transform="translate(222,169.0) rotate(-90)" x="0" y="0" text-anchor="middle">9</text>
<rect x="218" y="175.1" width="1.5" height="1"/>
<rect x="216" y="181.7" width="5" height="1"/>
<rect x="218" y="188.2" width="1.5" height="1"/>
<text transform="translate(222,195.3) rotate(-90)" x="0" y="0" text-anchor="middle">8</text>
<rect x="218" y="201.4" width="1.5" height="1"/>
<rect x="216" y="208.0" width="5" height="1"/>
<rect x="218" y="214.6" width="1.5" height="1"/>
<text transform="translate(222,221.7) rotate(-90)" x="0" y="0" text-anchor="middle">7</text>
<rect x="218" y="227.8" width="1.5" height="1"/>
<rect x="216" y="234.4" width="5" height="1"/>
<rect x="218" y="241.0" width="1.5" height="1"/>
<text transform="translate(222,248.1) rotate(-90)" x="0" y="0" text-anchor="middle">6</text>
<rect x="218" y="254.2" width="1.5" height="1"/>
<rect x="216" y="260.8" width="5" height="1"/>
<rect x="218" y="267.4" width="1.5" height="1"/>
<text transform="translate(222,274.5) rotate(-90)" x="0" y="0" text-anchor="middle">5</text>
<rect x="218" y="280.5" width="1.5" height="1"/>
<rect x="216" y="287.1" width="5" height="1"/>
<rect x="218" y="293.7" width="1.5" height="1"/>
<text transform="translate(222,300.8) rotate(-90)" x="0" y="0" text-anchor="middle">4</text>
<rect x="218" y="306.9" width="1.5" height="1"/>
<rect x="216" y="313.5" width="5" height="1"/>
<rect x="218" y="320.1" width="1.5" height="1"/>
<text transform="translate(222,327.2) rotate(-90)" x="0" y="0" text-anchor="middle">3</text>
<rect x="218" y="333.3" width="1.5" height="1"/>
<rect x="216" y="339.9" width="5" height="1"/>
<rect x="218" y="346.5" width="1.5" height="1"/>
<text transform="translate(222,353.6) rotate(-90)" x="0" y="0" text-anchor="middle">2</text>
<rect x="218" y="359.7" width="1.5" height="1"/>
<rect x="216" y="366.2" width="5" height="1"/>
<rect x="218" y="372.8" width="1.5" height="1"/>
<text transform="translate(222,379.9) rotate(-90)" x="0" y="0" text-anchor="middle">1</text>
<rect x="218" y="386.0" width="1.5" height="1"/>
<rect x="216" y="392.6" width="5" height="1"/>
<rect x="218" y="399.2" width="1.5" height="1"/>
<text transform="translate(222,406.3) rotate(-90)" x="0" y="0" text-anchor="middle">0</text>
<rect x="218" y="412.4" width="1.5" height="1"/>
<rect x="216" y="419.0" width="5" height="1"/>
<rect x="218" y="425.6" width="1.5" height="1"/>
<text transform="translate(222,432.7) rotate(-90)" x="0" y="0" text-anchor="middle">1</text>
<rect x="218" y="438.8" width="1.5" height="1"/>
<rect x="216" y="445.4" width="5" height="1"/>
<rect x="218" y="451.9" width="1.5" height="1"/>
<text transform="translate(222,459.0) rotate(-90)" x="0" y="0" text-anchor="middle">2</text>
<rect x="218" y="465.1" width="1.5" height="1"/>
<rect x="216" y="471.7" width="5" height="1"/>
<rect x="218" y="478.3" width="1.5" height="1"/>
<text transform="translate(222,485.4) rotate(-90)" x="0" y="0" text-anchor="middle">3</text>
<rect x="218" y="491.5" width="1.5" height="1"/>
<rect x="216" y="498.1" width="5" height="1"/>
<rect x="218" y="504.7" width="1.5" height="1"/>
<text transform="translate(222,511.8) rotate(-90)" x="0" y="0" text-anchor="middle">4</text>
<rect x="218" y="517.9" width="1.5" height="1"/>
<rect x="216" y="524.5" width="5" height="1"/>
<rect x="218" y="531.1" width="1.5" height="1"/>
<text transform="translate(222,538.1) rotate(-90)" x="0" y="0" text-anchor="middle">5</text>
<rect x="218" y="544.2" width="1.5" height="1"/>
<rect x="216" y="550.8" width="5" height="1"/>
<rect x="218" y="557.4" width="1.5" height="1"/>
<text transform="translate(222,564.5) rotate(-90)" x="0" y="0" text-anchor="middle">6</text>
<rect x="218" y="570.6" width="1.5" height="1"/>
<rect x="216" y="577.2" width="5" height="1"/>
<rect x="218" y="583.8" width="1.5" height="1"/>
<text transform="translate(222,590.9) rotate(-90)" x="0" y="0" text-anchor="middle">7</text>
<rect x="218" y="597.0" width="1.5" height="1"/>
<rect x="216" y="603.6" width="5" height="1"/>
<rect x="218" y="610.2" width="1.5" height="1"/>
<text transform="translate(222,617.3) rotate(-90)" x="0" y="0" text-anchor="middle">8</text>
<rect x="218" y="623.4" width="1.5" height="1"/>
<rect x="216" y="629.9" width="5" height="1"/>
<rect x="218" y="636.5" width="1.5" height="1"/>
<text transform="translate(222,643.6) rotate(-90)" x="0" y="0" text-anchor="middle">9</text>
<rect x="218" y="649.7" width="1.5" height="1"/>
<rect x="216" y="656.3" width="5" height="1"/>
  </g>
</svg>

<!-- SLIDE -->
<div class="a" style="left:337px;top:153px;width:5px;height:506px;background:#EAEAEA"></div>
<div class="a" style="left:344px;top:154px;width:893px;height:504px;background:#FFF;box-shadow:0 0 0 1px #C9C9C9"></div>
<div class="a" style="left:344px;top:619px;width:893px;height:5px;background:#92C83F"></div>
<div class="a" style="left:344px;top:624px;width:893px;height:34px;background:#62A23A"></div>
<svg class="a" style="left:0;top:0" width="1242" height="665">
  <g shape-rendering="crispEdges">
  <rect x="423.5" y="175.5" width="740" height="107.5" fill="none" stroke="#666" stroke-dasharray="2 1"/>
  <rect x="432" y="282" width="732" height="1" fill="#606060"/>
  <rect x="423.5" y="290.5" width="740" height="297" fill="none" stroke="#666" stroke-dasharray="2 1"/>
  <g fill="none" stroke="#F4FAEE" stroke-dasharray="1 2">
    <rect x="423.5" y="627.5" width="183" height="29"/>
    <rect x="614.5" y="627.5" width="355" height="29"/>
    <rect x="1069.5" y="627.5" width="98" height="29"/>
  </g>
  </g>
  <g fill="#84B63C" stroke="#9CCB4E" stroke-width="0.3"><path d="M426.2 306.6 L427.9 305.2 L430.2 308.4 L440.5 298.8 L441.3 299.6 L430.8 311.9 L429.6 311.9Z"/><path d="M440.8 339.6 L442.5 338.2 L444.8 341.4 L455.1 331.8 L455.9 332.6 L445.4 344.9 L444.2 344.9Z"/><path d="M454.4 375.1 L456.1 373.7 L458.4 376.9 L468.7 367.3 L469.5 368.1 L459.0 380.4 L457.8 380.4Z"/><path d="M467.5 409.6 L469.2 408.2 L471.5 411.4 L481.8 401.8 L482.6 402.6 L472.1 414.9 L470.9 414.9Z"/><path d="M481.2 445.6 L482.9 444.2 L485.2 447.4 L495.5 437.8 L496.3 438.6 L485.8 450.9 L484.6 450.9Z"/></g>
</svg>
<div class="t" style="left:431.5px;top:237.5px;font-size:32.3px;line-height:40px;color:#4C4C4C;letter-spacing:0.25px">Uredite stil naslova matrice</div>
<div class="t" style="left:446px;top:297.5px;font-size:20px;line-height:24px;color:#404040;letter-spacing:0.35px">Uredite stilove teksta matrice</div>
<div class="t" style="left:461px;top:330px;font-size:19.5px;line-height:24px;color:#404040;letter-spacing:0.15px">Druga razina</div>
<div class="t" style="left:474.5px;top:365px;font-size:19.5px;line-height:24px;color:#404040;letter-spacing:0.1px">Treća razina</div>
<div class="t" style="left:488px;top:401px;font-size:19.5px;line-height:24px;color:#404040;letter-spacing:0.3px">Četvrta razina</div>
<div class="t" style="left:501.5px;top:436px;font-size:19.5px;line-height:24px;color:#404040;letter-spacing:0.15px">Peta razina</div>

<!-- content icons -->
<svg class="a" style="left:0;top:0" width="1242" height="665">
 <g opacity="0.8">
  <g>
    <rect x="743.5" y="407.5" width="27" height="24" fill="#FFF" stroke="#A8A8A8"/>
    <rect x="743.5" y="407.5" width="27" height="4" fill="#A8A8A8"/>
    <path d="M752.5 411.5v20 M761.5 411.5v20 M743.5 416.5h27 M743.5 421.5h27 M743.5 426.5h27" stroke="#BDBDBD" stroke-width="1"/>
  </g>
  <rect x="781" y="415" width="6" height="17" fill="#A4C0DE"/>
  <rect x="789" y="407" width="6" height="25" fill="#F3DDA8"/>
  <rect x="797" y="412" width="6" height="20" fill="#AAAAAA"/>
  <path d="M815 408h20l4 5-4 3h-12v6h-8l4-7z" fill="#A9C4B4"/>
  <rect x="824.5" y="416.5" width="19" height="14" fill="#FFF" stroke="#A8A8A8"/>
  <path d="M828 421h2 M832 421h9 M828 424h2 M832 424h9 M828 427h2 M832 427h9" stroke="#B0B0B0" stroke-width="0.8"/>
  <rect x="743.5" y="442.5" width="27" height="27" fill="#FFF" stroke="#A8A8A8"/>
  <circle cx="763.5" cy="449" r="2.6" fill="#F2D9A0"/>
  <path d="M744.5 469V463Q748 456.5 751 456.5Q754 456.5 757 462V469Z" fill="#DAE2EE"/>
  <rect x="757.8" y="457.8" width="14.6" height="10.6" fill="#FFF" stroke="#8C9AB4" stroke-width="1.6"/>
  <path d="M762 471.5h7" stroke="#9AA6BC" stroke-width="1.2"/>
  <rect x="779.5" y="442.5" width="27" height="27" fill="#FFF" stroke="#A8A8A8"/>
  <circle cx="799.5" cy="449" r="2.6" fill="#F2D9A0"/>
  <path d="M780.5 469V463Q784 456.5 787 456.5Q790 456.5 793 462V469Z" fill="#DAE2EE"/>
  <g fill="#FFF" stroke="#8EA8C8" stroke-width="1">
    <circle cx="801.5" cy="464.3" r="7"/>
    <ellipse cx="801.5" cy="464.3" rx="3" ry="7" fill="none"/>
    <path d="M794.5 464.3h14 M795.5 460.8h12 M795.5 467.8h12" fill="none"/>
  </g>
  <rect x="817.5" y="444.5" width="23" height="23" fill="#FFF" stroke="#A8A8A8"/>
  <path d="M817.5 448.5h23 M817.5 463.5h23" stroke="#A8A8A8"/>
  <path d="M820 446.5h2 M824 446.5h2 M828 446.5h2 M832 446.5h2 M836 446.5h2 M820 465.5h2 M824 465.5h2 M828 465.5h2" stroke="#B0B0B0" stroke-width="1.5"/>
  <g fill="#FFF" stroke="#8EA8C8" stroke-width="1">
    <circle cx="837.5" cy="464.3" r="7"/>
    <ellipse cx="837.5" cy="464.3" rx="3" ry="7" fill="none"/>
    <path d="M830.5 464.3h14 M831.5 460.8h12 M831.5 467.8h12" fill="none"/>
  </g>
 </g>
</svg>

<!-- footer text -->
<div class="t" style="left:430.5px;top:638px;font-size:8px;line-height:10px;color:#DDF0CC;font-weight:bold;letter-spacing:0.35px">5/14/2016</div>
<div class="t" style="left:772px;top:638px;font-size:7.2px;line-height:10px;color:#DDF0CC;font-weight:bold;letter-spacing:-0.15px">PODNOŽJE</div>
<div class="t" style="left:1147.5px;top:637px;font-size:9.5px;line-height:10px;color:#E2F4D0;font-weight:bold;letter-spacing:-0.3px">‹#›</div>

</body></html>
